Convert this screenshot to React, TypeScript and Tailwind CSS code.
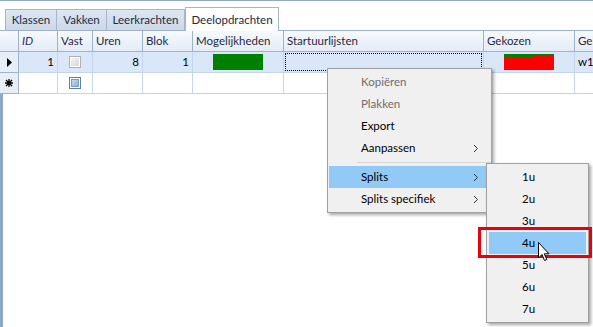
import React from "react";

const cols = [
  { key: "id", label: "ID", w: "w-[39px]", italic: true },
  { key: "vast", label: "Vast", w: "w-[35px]" },
  { key: "uren", label: "Uren", w: "w-[50px]" },
  { key: "blok", label: "Blok", w: "w-[50px]" },
  { key: "mog", label: "Mogelijkheden", w: "w-[91px]" },
  { key: "start", label: "Startuurlijsten", w: "w-[200px]" },
  { key: "gek", label: "Gekozen", w: "w-[91px]" },
  { key: "gel", label: "Gel", w: "w-[60px]" },
];

const tabs = [
  { label: "Klassen", w: "w-[52px]" },
  { label: "Vakken", w: "w-[50px]" },
  { label: "Leerkrachten", w: "w-[78px]" },
];

function Chevron() {
  return (
    <svg width="6" height="9" viewBox="0 0 6 9" className="text-[#333]">
      <path d="M1 1 L4.5 4.5 L1 8" fill="none" stroke="currentColor" strokeWidth="1" />
    </svg>
  );
}

function Checkbox({ active }: { active?: boolean }) {
  if (active) {
    return (
      <div className="h-[12px] w-[12px] border border-[#5d7fae] bg-white p-[1px]">
        <div className="h-full w-full border border-[#7d9ccb] bg-gradient-to-br from-[#c9dbf2] to-[#8eaedb]" />
      </div>
    );
  }
  return (
    <div className="h-[12px] w-[12px] border border-[#b1b1b1] bg-white p-[1px]">
      <div className="h-full w-full bg-gradient-to-br from-[#f1f1f1] to-[#dadada]" />
    </div>
  );
}

function MenuItem({
  label,
  disabled,
  sub,
  active,
}: {
  label: string;
  disabled?: boolean;
  sub?: boolean;
  active?: boolean;
}) {
  return (
    <div
      className={`mx-px flex h-[22px] items-center pl-[32px] pr-[11px] ${
        active ? "bg-[#91c9f7]" : ""
      } ${disabled ? "text-[#6d6d6d]" : "text-black"}`}
    >
      <span className="flex-1">{label}</span>
      {sub && <Chevron />}
    </div>
  );
}

function SubItem({ label, active }: { label: string; active?: boolean }) {
  return (
    <div
      className={`mx-[2px] flex h-[22px] items-center pl-[33px] ${
        active ? "bg-[#91c9f7]" : ""
      }`}
    >
      {label}
    </div>
  );
}

export default function App() {
  return (
    <div
      className="relative h-[327px] w-[593px] overflow-hidden border-t border-[#8ea8c8] bg-white text-[11.5px] text-black"
      style={{ fontFamily: 'Lato, "Noto Sans", sans-serif' }}
    >
      {/* tabs */}
      <div className="flex h-[29px] items-end pl-[5px]">
        {tabs.map((t) => (
          <div
            key={t.label}
            className={`${t.w} flex h-[21px] items-center justify-center border-t border-r border-[#a3b6cf] bg-gradient-to-b from-[#dde6f1] to-[#cdd9e8] text-[#1e2b3f] first:border-l`}
          >
            {t.label}
          </div>
        ))}
        <div className="relative z-10 mb-[-1px] flex h-[24px] w-[94px] items-center justify-center border-x border-t border-[#a3b6cf] bg-white text-[#1e2b3f]">
          Deelopdrachten
        </div>
      </div>

      {/* grid header */}
      <div className="flex h-[22px] border-y border-[#9fb3cc] bg-gradient-to-b from-[#f7f9fc] to-[#e4ecf7] text-[#1e2b45]">
        <div className="w-[19px] shrink-0 border-r border-[#9fb3cc]" />
        {cols.map((c) => (
          <div
            key={c.key}
            className={`${c.w} flex shrink-0 items-center overflow-hidden whitespace-nowrap border-r border-[#9fb3cc] pl-[3px] ${
              c.italic ? "italic text-[#2b2a70]" : ""
            }`}
          >
            {c.label}
          </div>
        ))}
      </div>

      {/* row 1 */}
      <div className="flex h-[21px] border-b border-[#c5d5ea] bg-[#d9e7f9]">
        <div className="mb-[-1px] flex w-[19px] shrink-0 items-center justify-center border-r border-b border-[#9fb3cc] bg-[#e8eef7]">
          <svg width="5" height="9" viewBox="0 0 5 9">
            <path d="M0 0 L5 4.5 L0 9 Z" fill="#000" />
          </svg>
        </div>
        <div className="flex w-[39px] shrink-0 items-center justify-end border-r border-[#c5d5ea] pr-[3px]">1</div>
        <div className="flex w-[35px] shrink-0 items-center justify-center border-r border-[#c5d5ea]">
          <Checkbox />
        </div>
        <div className="flex w-[50px] shrink-0 items-center justify-end border-r border-[#c5d5ea] pr-[3px]">8</div>
        <div className="flex w-[50px] shrink-0 items-center justify-end border-r border-[#c5d5ea] pr-[3px]">1</div>
        <div className="flex w-[91px] shrink-0 items-center justify-center border-r border-[#c5d5ea]">
          <div className="h-[16px] w-[50px] bg-[#008000]" />
        </div>
        <div className="w-[200px] shrink-0 border-r border-[#c5d5ea] p-[1px]">
          <div className="h-full w-full border border-dotted border-black" />
        </div>
        <div className="flex w-[91px] shrink-0 items-center justify-center border-r border-[#c5d5ea]">
          <div className="flex h-[16px] w-[50px] flex-col bg-[#ff0000]">
            <div className="h-[2px] bg-[#008000]" />
            <div className="h-[1px] w-[30px] bg-[#008000]" />
          </div>
        </div>
        <div className="flex flex-1 items-center pl-[3px]">w1</div>
      </div>

      {/* row 2 */}
      <div className="flex h-[21px] border-b border-[#c5d5ea] bg-white">
        <div className="mb-[-1px] flex w-[19px] shrink-0 items-center justify-center border-r border-b border-[#9fb3cc] bg-[#e8eef7]">
          <svg width="8" height="8" viewBox="0 0 8 8">
            <path d="M4 0 V8 M0 4 H8 M1 1 L7 7 M7 1 L1 7" stroke="#000" strokeWidth="1.3" />
          </svg>
        </div>
        <div className="w-[39px] shrink-0 border-r border-[#c5d5ea]" />
        <div className="flex w-[35px] shrink-0 items-center justify-center border-r border-[#c5d5ea]">
          <Checkbox active />
        </div>
        <div className="w-[50px] shrink-0 border-r border-[#c5d5ea]" />
        <div className="w-[50px] shrink-0 border-r border-[#c5d5ea]" />
        <div className="w-[91px] shrink-0 border-r border-[#c5d5ea]" />
        <div className="w-[200px] shrink-0 border-r border-[#c5d5ea]" />
        <div className="w-[91px] shrink-0 border-r border-[#c5d5ea]" />
        <div className="flex-1" />
      </div>

      {/* empty area */}
      <div className="h-[240px] border-l-[3px] border-[#8ea8c8]" />

      {/* context menu */}
      <div className="absolute left-[327px] top-[67px] z-20 w-[165px] border border-[#a0a0a0] bg-[#f0f0f0] py-[2px] shadow-[2px_2px_3px_rgba(0,0,0,0.35)]">
        <MenuItem label="Kopiëren" disabled />
        <MenuItem label="Plakken" disabled />
        <MenuItem label="Export" />
        <MenuItem label="Aanpassen" sub />
        <div className="my-[3px] ml-[29px] h-px bg-[#d7d7d7]" />
        <MenuItem label="Splits" sub active />
        <MenuItem label="Splits specifiek" sub />
      </div>

      {/* submenu */}
      <div className="absolute left-[486px] top-[162px] z-30 w-[103px] border border-[#a0a0a0] bg-[#f0f0f0] py-[2px] shadow-[2px_2px_3px_rgba(0,0,0,0.35)]">
        {["1u", "2u", "3u", "4u", "5u", "6u", "7u"].map((u) => (
          <SubItem key={u} label={u} active={u === "4u"} />
        ))}
      </div>

      {/* red highlight box */}
      <div className="absolute left-[478px] top-[226px] z-40 h-[31px] w-[114px] border-[3px] border-[#e8000b]" />

      {/* cursor */}
      <svg
        className="absolute left-[538px] top-[241px] z-50"
        width="13"
        height="20"
        viewBox="0 0 13 20"
      >
        <path
          d="M0.5 0.5 L0.5 16 L4 12.5 L6.5 18.5 L8.8 17.5 L6.3 11.8 L11 11.8 Z"
          fill="#fff"
          stroke="#000"
          strokeWidth="1"
          strokeLinejoin="miter"
        />
      </svg>
    </div>
  );
}
